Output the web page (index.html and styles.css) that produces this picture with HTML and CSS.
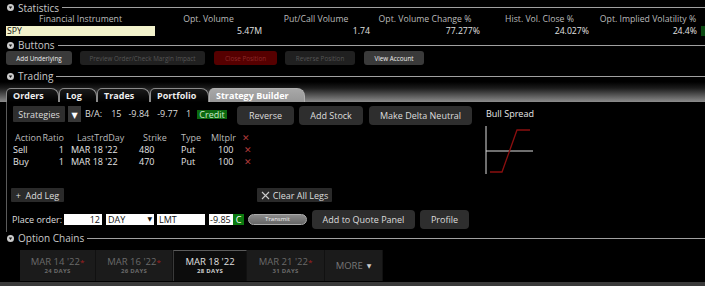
FILE: index.html
```html
<!DOCTYPE html>
<html lang="en">
<head>
  <meta charset="UTF-8">
  <title>Strategy Builder</title>
  <link rel="stylesheet" href="styles.css">
</head>
<body>
  <div class="section-head">
    <svg class="toggle" width="7" height="7" viewBox="0 0 7 7"><circle cx="3.5" cy="3.5" r="3.5" fill="#ccc"/><polygon points="1.8,2.6 5.2,2.6 3.5,5" fill="#111"/></svg>
    <span class="title">Statistics</span>
    <span class="rule"></span>
  </div>
  <div class="stats">
    <div class="stats-row head">
      <span class="c-inst">Financial Instrument</span>
      <span class="c1">Opt. Volume</span>
      <span class="c2">Put/Call Volume</span>
      <span class="c3">Opt. Volume Change %</span>
      <span class="c4">Hist. Vol. Close %</span>
      <span class="c5">Opt. Implied Volatility %</span>
    </div>
    <div class="stats-row vals">
      <span class="c-inst sym">SPY</span>
      <span class="c1">5.47M</span>
      <span class="c2">1.74</span>
      <span class="c3">77.277%</span>
      <span class="c4">24.027%</span>
      <span class="c5">24.4%</span>
      <span class="flag"></span>
    </div>
  </div>

  <div class="section-head buttons-head">
    <svg class="toggle" width="7" height="7" viewBox="0 0 7 7"><circle cx="3.5" cy="3.5" r="3.5" fill="#ccc"/><polygon points="1.8,2.6 5.2,2.6 3.5,5" fill="#111"/></svg>
    <span class="title">Buttons</span>
    <span class="rule"></span>
  </div>
  <div class="mini-buttons">
    <span class="mini on w-under">Add Underlying</span>
    <span class="mini off w-prev">Preview Order/Check Margin Impact</span>
    <span class="mini red w-close">Close Position</span>
    <span class="mini off w-rev">Reverse Position</span>
    <span class="mini on w-acct">View Account</span>
  </div>

  <div class="section-head trading-head">
    <svg class="toggle" width="7" height="7" viewBox="0 0 7 7"><circle cx="3.5" cy="3.5" r="3.5" fill="#ccc"/><polygon points="1.8,2.6 5.2,2.6 3.5,5" fill="#111"/></svg>
    <span class="title">Trading</span>
    <span class="rule"></span>
  </div>
  <div class="tab-bar">
    <span class="tab w-orders">Orders</span>
    <span class="tab w-log">Log</span>
    <span class="tab w-trades">Trades</span>
    <span class="tab w-port">Portfolio</span>
    <span class="tab active w-sb">Strategy Builder</span>
  </div>

  <div class="builder">
    <div class="builder-main">
      <div class="strategy-row">
        <span class="btn strat">Strategies</span>
        <span class="btn drop">▼</span>
        <span class="ba">B/A:</span>
        <span class="ba n1">15</span>
        <span class="ba n2">-9.84</span>
        <span class="ba n3">-9.77</span>
        <span class="ba n4">1</span>
        <span class="credit">Credit</span>
        <span class="btn big w-reverse">Reverse</span>
        <span class="btn big w-stock">Add Stock</span>
        <span class="btn big w-delta">Make Delta Neutral</span>
      </div>

      <div class="legs">
        <div class="legs-row head">
          <span class="l-act">Action</span>
          <span class="l-ratio">Ratio</span>
          <span class="l-day">LastTrdDay</span>
          <span class="l-strike">Strike</span>
          <span class="l-type">Type</span>
          <span class="l-mult">Mltplr</span>
          <span class="l-x">✕</span>
        </div>
        <div class="legs-row">
          <span class="l-act">Sell</span>
          <span class="l-ratio">1</span>
          <span class="l-day">MAR 18 '22</span>
          <span class="l-strike">480</span>
          <span class="l-type">Put</span>
          <span class="l-mult">100</span>
          <span class="l-x">✕</span>
        </div>
        <div class="legs-row">
          <span class="l-act">Buy</span>
          <span class="l-ratio">1</span>
          <span class="l-day">MAR 18 '22</span>
          <span class="l-strike">470</span>
          <span class="l-type">Put</span>
          <span class="l-mult">100</span>
          <span class="l-x">✕</span>
        </div>
      </div>

      <div class="leg-actions">
        <span class="btn small add-leg">+&nbsp; Add Leg</span>
        <span class="btn small clear-legs"><svg width="9" height="9" viewBox="0 0 9 9"><path d="M1 1 L8 8 M8 1 L1 8" stroke="#ccc" stroke-width="1.1"/></svg> Clear All Legs</span>
      </div>

      <div class="order-row">
        <span class="order-label">Place order:</span>
        <span class="field qty">12</span>
        <span class="field tif">DAY <span class="caret">▼</span></span>
        <span class="field type">LMT</span>
        <span class="field price">-9.85</span><span class="cflag">C</span>
        <span class="transmit">Transmit</span>
        <span class="btn big w-quote">Add to Quote Panel</span>
        <span class="btn big w-profile">Profile</span>
      </div>
    </div>

    <div class="builder-side">
      <div class="side-title">Bull Spread</div>
      <svg class="payoff" width="50" height="52" viewBox="0 0 50 52">
        <line x1="1" y1="2" x2="1" y2="50" stroke="#ddd" stroke-width="1"/>
        <line x1="1" y1="27" x2="48" y2="27" stroke="#ddd" stroke-width="1"/>
        <polyline points="5,48 17,48 32,6 45,6" fill="none" stroke="#8b0f0f" stroke-width="1.3"/>
      </svg>
    </div>
  </div>

  <div class="section-head chains-head">
    <svg class="toggle" width="7" height="7" viewBox="0 0 7 7"><circle cx="3.5" cy="3.5" r="3.5" fill="#ccc"/><polygon points="1.8,2.6 5.2,2.6 3.5,5" fill="#111"/></svg>
    <span class="title">Option Chains</span>
    <span class="rule"></span>
  </div>
  <div class="dates">
    <div class="date w-d1"><span class="d-main">MAR 14 '22<b>*</b></span><span class="d-sub">24 DAYS</span></div>
    <div class="date w-d2"><span class="d-main">MAR 16 '22<b>*</b></span><span class="d-sub">26 DAYS</span></div>
    <div class="date active w-d3"><span class="d-main">MAR 18 '22</span><span class="d-sub">28 DAYS</span></div>
    <div class="date w-d4"><span class="d-main">MAR 21 '22<b>*</b></span><span class="d-sub">31 DAYS</span></div>
    <div class="date more w-d5">MORE <span class="more-caret">▼</span></div>
  </div>
  <div class="bottom-bar"></div>
</body>
</html>
```

FILE: styles.css
```css
body {
  margin: 0;
  width: 705px;
  height: 286px;
  overflow: hidden;
  background: #000;
  color: #ddd;
  font-family: "Open Sans", "DejaVu Sans", sans-serif;
  font-size: 9px;
}

/* ---- section headers ---- */
.section-head {
  display: flex;
  align-items: center;
  height: 15px;
  padding-left: 7px;
}
.toggle {
  flex: none;
}
.section-head .title {
  margin-left: 4px;
  font-size: 10px;
  color: #c8c8c8;
}
.section-head .rule {
  flex: 1;
  height: 1px;
  margin-left: 3px;
  background: #a0a0a0;
}
.buttons-head {
  height: 12px;
  margin-top: 3px;
}
.trading-head {
  height: 12px;
  margin-top: 5px;
}
.chains-head {
  height: 12px;
}

/* ---- statistics ---- */
.stats-row {
  display: flex;
  padding-left: 6px;
  font-size: 8.7px;
}
.stats-row.head {
  height: 11px;
  line-height: 9px;
  color: #bbb;
  text-align: center;
}
.stats-row.vals {
  height: 10px;
  line-height: 11px;
  text-align: right;
  color: #e0e0e0;
}
.c-inst { width: 149px; }
.c1 { width: 107px; }
.c2 { width: 108px; }
.c3 { width: 110px; }
.c4 { width: 109px; }
.c5 { width: 108px; }
.stats-row.head span { white-space: nowrap; box-sizing: border-box; }
.stats-row.head .c4 { padding-left: 10px; }
.stats-row.head .c5 { padding-left: 10px; }
.sym {
  text-align: left;
  background: #f2f2cc;
  color: #111;
  padding-left: 1px;
  box-sizing: border-box;
}
.flag {
  width: 4px;
  margin-left: 4px;
  background: #0b4a12;
}

/* ---- buttons panel ---- */
.mini-buttons {
  display: flex;
  height: 14px;
  padding-left: 6px;
}
.mini {
  display: flex;
  align-items: center;
  justify-content: center;
  border-radius: 3px;
  font-size: 6.3px;
  white-space: nowrap;
}
.mini.on { background: #3a3a3a; color: #eee; }
.mini.off { background: #202020; color: #555; }
.mini.red { background: #560000; color: #8e2a2a; }
.w-under { width: 66px; }
.w-prev { width: 125px; margin-left: 8px; }
.w-close { width: 63px; margin-left: 9px; }
.w-rev { width: 70px; margin-left: 8px; }
.w-acct { width: 60px; margin-left: 9px; }

/* ---- trading tabs ---- */
.tab-bar {
  display: flex;
  align-items: flex-end;
  height: 20px;
  padding-left: 6px;
  background: linear-gradient(#000 0%, #1a1a1a 30%, #8c8c8c 100%);
}
.tab {
  box-sizing: border-box;
  height: 14px;
  line-height: 13px;
  padding-left: 6px;
  font-weight: bold;
  color: #eee;
  background: linear-gradient(#1a1a1a, #000);
  border: 1px solid #8a8a8a;
  border-bottom: none;
  border-radius: 5px 8px 0 0;
}
.tab.active {
  background: linear-gradient(#a8a8a8, #979797);
  border-color: #b0b0b0;
  color: #fff;
}
.w-orders { width: 53px; }
.w-log { width: 38px; }
.w-trades { width: 53px; }
.w-port { width: 59px; }
.w-sb { width: 96px; }

/* ---- strategy builder ---- */
.builder {
  display: flex;
  margin-left: 6px;
  border-left: 1px solid #5a5a5a;
  height: 130px;
}
.builder-main {
  width: 473px;
  padding-left: 6px;
}
.strategy-row {
  display: flex;
  align-items: flex-start;
  margin-top: 4px;
  height: 19px;
}
.btn {
  display: flex;
  align-items: center;
  justify-content: center;
  box-sizing: border-box;
  background: #2e2e2e;
  color: #ddd;
  white-space: nowrap;
}
.strat {
  width: 52px;
  height: 16px;
  border-radius: 1px;
}
.drop {
  width: 13px;
  height: 16px;
  margin-left: 3px;
  background: #383838;
  color: #fff;
  font-size: 8px;
}
.ba {
  line-height: 16px;
  margin-left: 4px;
  color: #ddd;
}
.ba.n1 { margin-left: 9px; }
.ba.n2 { margin-left: 7px; }
.ba.n3 { margin-left: 8px; }
.ba.n4 { margin-left: 8px; }
.credit {
  margin: 4px 0 0 6px;
  width: 30px;
  height: 9px;
  line-height: 9px;
  text-align: center;
  background: #0b6a0f;
  color: #c8e8c8;
}
.big {
  height: 19px;
  border-radius: 4px;
}
.w-reverse { width: 57px; margin-left: 10px; }
.w-stock { width: 64px; margin-left: 5px; }
.w-delta { width: 103px; margin-left: 6px; }

.legs {
  margin-top: 7px;
}
.legs-row {
  display: flex;
  height: 12px;
  line-height: 12px;
  margin-left: -6px;
  color: #e4e4e4;
}
.legs-row.head { color: #bbb; }
.legs-row span { white-space: nowrap; }
.l-act { width: 25px; padding-left: 6px; }
.l-ratio { width: 26px; text-align: right; padding-right: 5px; }
.l-day { width: 58px; padding-left: 2px; }
.l-strike { width: 42px; padding-left: 10px; }
.l-type { width: 27px; }
.l-mult { width: 24px; padding-left: 10px; }
.l-x { color: #b03a3a; font-size: 9px; font-weight: bold; padding-left: 2px; }
.head .l-act { padding-left: 8px; width: 23px; }
.head .l-ratio { padding-right: 1px; }
.head .l-day { padding-left: 12px; width: 48px; }
.head .l-strike { padding-left: 18px; width: 36px; }
.head .l-type { padding-left: 2px; width: 30px; }
.head .l-mult { padding-left: 0; width: 31px; }
.head .l-x { padding-left: 0; }

.leg-actions {
  display: flex;
  margin-top: 20px;
  height: 14px;
}
.small {
  height: 14px;
  border-radius: 1px;
  background: #2a2a2a;
  gap: 3px;
}
.add-leg { width: 53px; margin-left: -2px; }
.clear-legs { width: 75px; margin-left: 193px; }

.order-row {
  display: flex;
  align-items: center;
  margin-top: 8px;
  height: 19px;
}
.order-label {
  width: 52px;
  margin-left: -1px;
}
.field {
  box-sizing: border-box;
  height: 11px;
  line-height: 11px;
  background: #fff;
  color: #111;
  padding: 0 2px;
}
.qty { width: 38px; text-align: right; }
.tif {
  display: flex;
  justify-content: space-between;
  width: 48px;
  margin-left: 4px;
}
.caret { font-size: 6px; }
.type { width: 48px; margin-left: 3px; }
.price { width: 24px; margin-left: 4px; padding: 0 1px; }
.cflag {
  width: 11px;
  height: 11px;
  line-height: 11px;
  text-align: center;
  background: #0b7a0f;
  color: #fff;
}
.transmit {
  box-sizing: border-box;
  width: 59px;
  height: 11px;
  line-height: 9px;
  margin-left: 4px;
  text-align: center;
  font-size: 6px;
  color: #f2f2f2;
  background: linear-gradient(#8a8a8a, #666);
  border: 1px solid #aaa;
  border-radius: 6px;
}
.w-quote { width: 103px; margin-left: 5px; }
.w-profile { width: 49px; margin-left: 5px; }

.builder-side {
  padding-left: 0;
}
.side-title {
  margin-top: 6px;
  height: 12px;
  line-height: 12px;
  color: #e8e8e8;
}
.payoff {
  display: block;
  margin-top: 4px;
  margin-left: -1px;
}

/* ---- option chains ---- */
.dates {
  display: flex;
  height: 31px;
  margin-top: 6px;
  padding-left: 20px;
}
.date {
  box-sizing: border-box;
  display: flex;
  flex-direction: column;
  align-items: center;
  justify-content: center;
  background: #1b1b1b;
  border-right: 1px solid #111;
  color: #6a6a6a;
}
.date.active {
  background: #0c0c0c;
  border-top: 1px solid #5a5a5a;
  border-left: 1px solid #3a3a3a;
  color: #e0e0e0;
}
.d-main {
  font-size: 9.5px;
  line-height: 11px;
}
.d-main b {
  color: #a02020;
  font-weight: normal;
  font-size: 8px;
  vertical-align: top;
}
.d-sub {
  font-size: 6px;
  font-weight: bold;
  line-height: 9px;
  letter-spacing: 0.3px;
}
.active .d-sub { color: #ccc; }
.more {
  flex-direction: row;
  gap: 4px;
  font-size: 9.5px;
  color: #777;
}
.more-caret {
  font-size: 6px;
  color: #ccc;
}
.w-d1 { width: 76px; }
.w-d2 { width: 77px; }
.w-d3 { width: 74px; }
.w-d4 { width: 78px; }
.w-d5 { width: 58px; }

.bottom-bar {
  margin-top: 1px;
  height: 4px;
  background: #3a3a3a;
}
```
